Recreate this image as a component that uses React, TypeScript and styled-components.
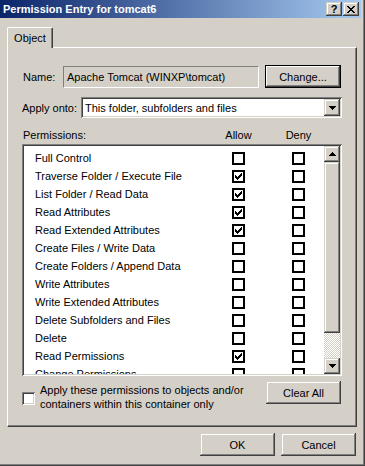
import React from 'react';
import styled, { createGlobalStyle } from 'styled-components';

const GlobalStyle = createGlobalStyle`
  html, body { margin: 0; padding: 0; background: #d4d0c8; }
  body {
    font-family: "Liberation Sans", Arial, sans-serif;
    font-size: 11px;
    color: #000;
  }
  * { box-sizing: border-box; }
`;

const raised = `inset -1px -1px #404040, inset 1px 1px #d4d0c8, inset -2px -2px #808080, inset 2px 2px #fff`;
const sunken = `inset 1px 1px #808080, inset -1px -1px #fff, inset 2px 2px #404040, inset -2px -2px #d4d0c8`;

const Window = styled.div`
  width: 365px;
  height: 466px;
  background: #d4d0c8;
  border-right: 1px solid #404040;
  border-bottom: 1px solid #404040;
  box-shadow: inset -1px -1px #808080;
  padding: 0 3px 3px 0;
  display: flex;
  flex-direction: column;
  overflow: hidden;
`;

const TitleBar = styled.div`
  height: 18px;
  flex: none;
  display: flex;
  align-items: center;
  padding: 0 2px 0 3px;
  background: linear-gradient(to right, #0a246a, #a6caf0);
`;

const Title = styled.div`
  flex: 1;
  color: #fff;
  font-weight: bold;
  font-size: 11px;
  white-space: nowrap;
`;

const CaptionButton = styled.div<{ $gap?: number }>`
  width: 16px;
  height: 14px;
  margin-left: ${p => p.$gap ?? 0}px;
  background: #d4d0c8;
  box-shadow: ${raised};
  display: flex;
  align-items: center;
  justify-content: center;
  font-weight: bold;
  font-size: 11px;
  line-height: 14px;
`;

const TabStrip = styled.div`
  display: flex;
  padding: 9px 0 0 7px;
`;

const Tab = styled.div`
  width: 46px;
  height: 21px;
  margin-bottom: -1px;
  background: #d4d0c8;
  border-top: 1px solid #fff;
  border-left: 1px solid #fff;
  border-right: 1px solid #404040;
  border-top-left-radius: 2px;
  border-top-right-radius: 2px;
  box-shadow: inset -1px 0 #808080;
  position: relative;
  z-index: 1;
  display: flex;
  align-items: center;
  justify-content: center;
  padding-bottom: 1px;
`;

const Panel = styled.div`
  margin-left: 7px;
  width: 350px;
  height: 380px;
  flex: none;
  border: 1px solid;
  border-color: #fff #404040 #404040 #fff;
  box-shadow: inset -1px -1px #808080;
  padding: 17px 14px 0 14px;
  display: flex;
  flex-direction: column;
`;

const FormRow = styled.div<{ $top?: number }>`
  display: flex;
  align-items: center;
  margin-top: ${p => p.$top ?? 0}px;
`;

const Label = styled.div<{ $w: number; $shift?: number }>`
  width: ${p => p.$w}px;
  flex: none;
  padding-left: ${p => p.$shift ?? 0}px;
  white-space: nowrap;
`;

const ReadOnlyField = styled.div`
  width: 196px;
  height: 22px;
  flex: none;
  margin-right: 6px;
  border: 1px solid;
  border-color: #808080 #fff #fff #808080;
  padding: 0 3px;
  display: flex;
  align-items: center;
  white-space: nowrap;
`;

const Button = styled.div<{ $w: number; $default?: boolean; $right?: number }>`
  width: ${p => p.$w}px;
  height: 23px;
  flex: none;
  margin-right: ${p => p.$right ?? 0}px;
  background: #d4d0c8;
  border: ${p => (p.$default ? '1px solid #000' : 'none')};
  box-shadow: ${p =>
    p.$default
      ? 'inset -1px -1px #404040, inset 1px 1px #fff, inset -2px -2px #808080'
      : raised};
  display: flex;
  align-items: center;
  justify-content: center;
`;

const Combo = styled.div`
  width: 261px;
  height: 21px;
  flex: none;
  background: #fff;
  box-shadow: ${sunken};
  padding: 2px;
  display: flex;
  align-items: stretch;
`;

const ComboText = styled.div`
  flex: 1;
  padding-left: 2px;
  display: flex;
  align-items: center;
  white-space: nowrap;
`;

const ComboButton = styled.div`
  width: 16px;
  background: #d4d0c8;
  box-shadow: ${raised};
  display: flex;
  align-items: center;
  justify-content: center;
`;

const ListHeader = styled.div`
  display: grid;
  grid-template-columns: 196px 41px 19px 41px;
  height: 17px;
  line-height: 17px;
  margin-top: 9px;
`;

const HeaderCell = styled.div<{ $col: number; $center?: boolean }>`
  grid-column: ${p => p.$col};
  text-align: ${p => (p.$center ? 'center' : 'left')};
  padding-left: ${p => (p.$center ? 0 : 1)}px;
`;

const ListBox = styled.div`
  width: 320px;
  height: 232px;
  background: #fff;
  box-shadow: ${sunken};
  padding: 2px;
  display: flex;
`;

const Rows = styled.div`
  flex: 1;
  overflow: hidden;
  padding: 3px 0 0 11px;
`;

const PermRow = styled.div`
  display: grid;
  grid-template-columns: 197px 60px 13px;
  align-items: center;
  height: 18px;
`;

const PermName = styled.div`
  white-space: nowrap;
`;

const FlatCheck = styled.div`
  width: 13px;
  height: 13px;
  border: 2px solid #000;
  background: #fff;
  padding: 1px;
  display: flex;
`;

const ScrollBar = styled.div`
  width: 16px;
  flex: none;
  display: flex;
  flex-direction: column;
`;

const ScrollButton = styled.div`
  height: 16px;
  flex: none;
  background: #d4d0c8;
  box-shadow: ${raised};
  display: flex;
  align-items: center;
  justify-content: center;
`;

const Thumb = styled.div`
  height: 171px;
  flex: none;
  background: #d4d0c8;
  box-shadow: ${raised};
`;

const Track = styled.div`
  flex: 1;
  background: repeating-conic-gradient(#fff 0 25%, #d4d0c8 0 50%) 0 0 / 2px 2px;
`;

const BottomRow = styled.div`
  display: flex;
  justify-content: space-between;
  align-items: flex-start;
  margin-top: 5px;
`;

const CheckGroup = styled.div`
  display: flex;
  align-items: flex-start;
  gap: 5px;
`;

const Check3D = styled.div`
  width: 13px;
  height: 13px;
  flex: none;
  margin-top: 11px;
  background: #fff;
  box-shadow: ${sunken};
`;

const CheckLabel = styled.div`
  margin-top: 2px;
  line-height: 14px;
  white-space: nowrap;
`;

const Footer = styled.div`
  display: flex;
  justify-content: flex-end;
  gap: 6px;
  padding: 6px 5px 0 0;
`;

const Pixels = ({ rows }: { rows: string[] }) => {
  const w = rows[0].length;
  const h = rows.length;
  return (
    <svg width={w} height={h} viewBox={`0 0 ${w} ${h}`} shapeRendering="crispEdges">
      {rows.flatMap((r, y) =>
        r.split('').map((c, x) =>
          c === 'X' ? <rect key={`${x}-${y}`} x={x} y={y} width={1} height={1} fill="#000" /> : null
        )
      )}
    </svg>
  );
};

const closeGlyph = ['XX....XX', '.XX..XX.', '..XXXX..', '...XX...', '..XXXX..', '.XX..XX.', 'XX....XX'];
const downGlyph = ['XXXXXXX', '.XXXXX.', '..XXX..', '...X...'];
const upGlyph = ['...X...', '..XXX..', '.XXXXX.', 'XXXXXXX'];
const checkGlyph = ['......X', '.....XX', 'X...XXX', 'XX.XXX.', 'XXXXX..', '.XXX...', '..X....'];

const permissions: [string, boolean][] = [
  ['Full Control', false],
  ['Traverse Folder / Execute File', true],
  ['List Folder / Read Data', true],
  ['Read Attributes', true],
  ['Read Extended Attributes', true],
  ['Create Files / Write Data', false],
  ['Create Folders / Append Data', false],
  ['Write Attributes', false],
  ['Write Extended Attributes', false],
  ['Delete Subfolders and Files', false],
  ['Delete', false],
  ['Read Permissions', true],
  ['Change Permissions', false],
];

const Check = ({ on }: { on: boolean }) => (
  <FlatCheck>{on && <Pixels rows={checkGlyph} />}</FlatCheck>
);

export default function App() {
  return (
    <>
      <GlobalStyle />
      <Window>
        <TitleBar>
          <Title>Permission Entry for tomcat6</Title>
          <CaptionButton>?</CaptionButton>
          <CaptionButton $gap={1}>
            <Pixels rows={closeGlyph} />
          </CaptionButton>
        </TitleBar>

        <TabStrip>
          <Tab>Object</Tab>
        </TabStrip>

        <Panel>
          <FormRow>
            <Label $w={41} $shift={1}>Name:</Label>
            <ReadOnlyField>Apache Tomcat (WINXP\tomcat)</ReadOnlyField>
            <Button $w={76} $default>Change...</Button>
          </FormRow>

          <FormRow $top={9}>
            <Label $w={59} $shift={0}>Apply onto:</Label>
            <Combo>
              <ComboText>This folder, subfolders and files</ComboText>
              <ComboButton>
                <Pixels rows={downGlyph} />
              </ComboButton>
            </Combo>
          </FormRow>

          <ListHeader>
            <HeaderCell $col={1}>Permissions:</HeaderCell>
            <HeaderCell $col={2} $center>Allow</HeaderCell>
            <HeaderCell $col={4} $center>Deny</HeaderCell>
          </ListHeader>

          <ListBox>
            <Rows>
              {permissions.map(([name, allow]) => (
                <PermRow key={name}>
                  <PermName>{name}</PermName>
                  <Check on={allow} />
                  <Check on={false} />
                </PermRow>
              ))}
            </Rows>
            <ScrollBar>
              <ScrollButton>
                <Pixels rows={upGlyph} />
              </ScrollButton>
              <Thumb />
              <Track />
              <ScrollButton>
                <Pixels rows={downGlyph} />
              </ScrollButton>
            </ScrollBar>
          </ListBox>

          <BottomRow>
            <CheckGroup>
              <Check3D />
              <CheckLabel>
                Apply these permissions to objects and/or
                <br />
                containers within this container only
              </CheckLabel>
            </CheckGroup>
            <Button $w={75} $right={1}>Clear All</Button>
          </BottomRow>
        </Panel>

        <Footer>
          <Button $w={75}>OK</Button>
          <Button $w={75}>Cancel</Button>
        </Footer>
      </Window>
    </>
  );
}
